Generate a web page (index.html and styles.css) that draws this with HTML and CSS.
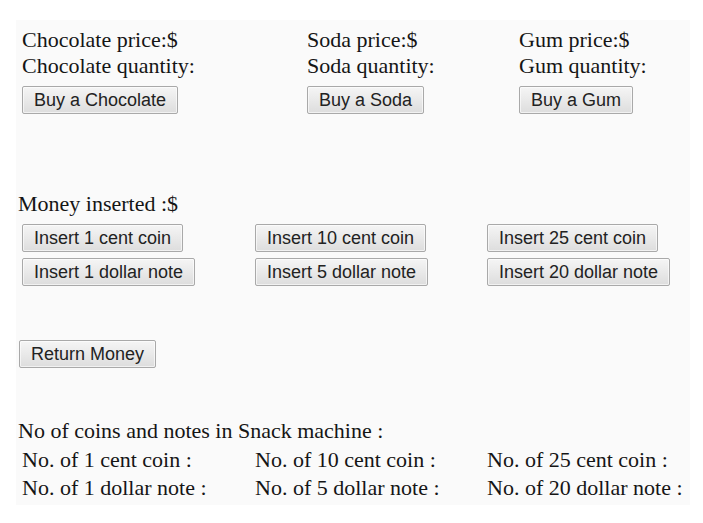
FILE: index.html
```html
<!DOCTYPE html>
<html>
<head>
<meta charset="utf-8">
<title>Snack machine</title>
<link rel="stylesheet" href="styles.css">
</head>
<body>
<div class="page">
  <div class="products">
    <div class="product">
      <div class="line">Chocolate price:$</div>
      <div class="line">Chocolate quantity:</div>
      <button class="btn buy">Buy a Chocolate</button>
    </div>
    <div class="product">
      <div class="line">Soda price:$</div>
      <div class="line">Soda quantity:</div>
      <button class="btn buy">Buy a Soda</button>
    </div>
    <div class="product">
      <div class="line">Gum price:$</div>
      <div class="line">Gum quantity:</div>
      <button class="btn buy">Buy a Gum</button>
    </div>
  </div>

  <div class="money">
    <div class="label">Money inserted :$</div>
    <div class="coin-grid">
      <button class="btn">Insert 1 cent coin</button>
      <button class="btn">Insert 10 cent coin</button>
      <button class="btn">Insert 25 cent coin</button>
      <button class="btn">Insert 1 dollar note</button>
      <button class="btn">Insert 5 dollar note</button>
      <button class="btn">Insert 20 dollar note</button>
    </div>
  </div>

  <div class="return-row">
    <button class="btn">Return Money</button>
  </div>

  <div class="counts">
    <div class="label">No of coins and notes in Snack machine :</div>
    <div class="count-grid">
      <div>No. of 1 cent coin :</div>
      <div>No. of 10 cent coin :</div>
      <div>No. of 25 cent coin :</div>
      <div>No. of 1 dollar note :</div>
      <div>No. of 5 dollar note :</div>
      <div>No. of 20 dollar note :</div>
    </div>
  </div>
</div>
</body>
</html>
```

FILE: styles.css
```css
html, body {
  margin: 0;
  padding: 0;
  background: #ffffff;
}

body {
  font-family: "Liberation Serif", "Times New Roman", serif;
  font-size: 22px;
  color: #151515;
}

.page {
  margin: 20px 13px 18px 16px;
  background: #fafafa;
  padding: 7px 0 3px 0;
}

.products {
  display: grid;
  grid-template-columns: 285px 212px 1fr;
  padding-left: 6px;
}

.product {
  display: flex;
  flex-direction: column;
  align-items: flex-start;
}

.line {
  line-height: 26px;
  height: 26px;
  white-space: nowrap;
}

.btn {
  font-family: "Liberation Sans", Arial, sans-serif;
  font-size: 18px;
  color: #222;
  height: 28px;
  box-sizing: border-box;
  padding: 0 11px;
  border: 1px solid #a9a9a9;
  border-radius: 2px;
  background: linear-gradient(#f5f5f5, #e8e8e8 55%, #dddddd);
  white-space: nowrap;
  margin: 0;
  line-height: 26px;
  box-shadow: inset 0 0 0 1px rgba(255,255,255,0.6);
}

.buy {
  margin-top: 7px;
}

.money {
  margin-top: 77px;
}

.label {
  padding-left: 2px;
  line-height: 26px;
  height: 26px;
  white-space: nowrap;
}

.coin-grid {
  margin-top: 7px;
  padding-left: 6px;
  display: grid;
  grid-template-columns: 233px 232px 1fr;
  row-gap: 6px;
  justify-items: start;
}

.return-row {
  margin-top: 54px;
  padding-left: 3px;
}

.counts {
  margin-top: 50px;
}

.count-grid {
  margin-top: 2px;
  padding-left: 6px;
  display: grid;
  grid-template-columns: 233px 232px 1fr;
  grid-auto-rows: 28px;
  line-height: 28px;
  white-space: nowrap;
}
```
